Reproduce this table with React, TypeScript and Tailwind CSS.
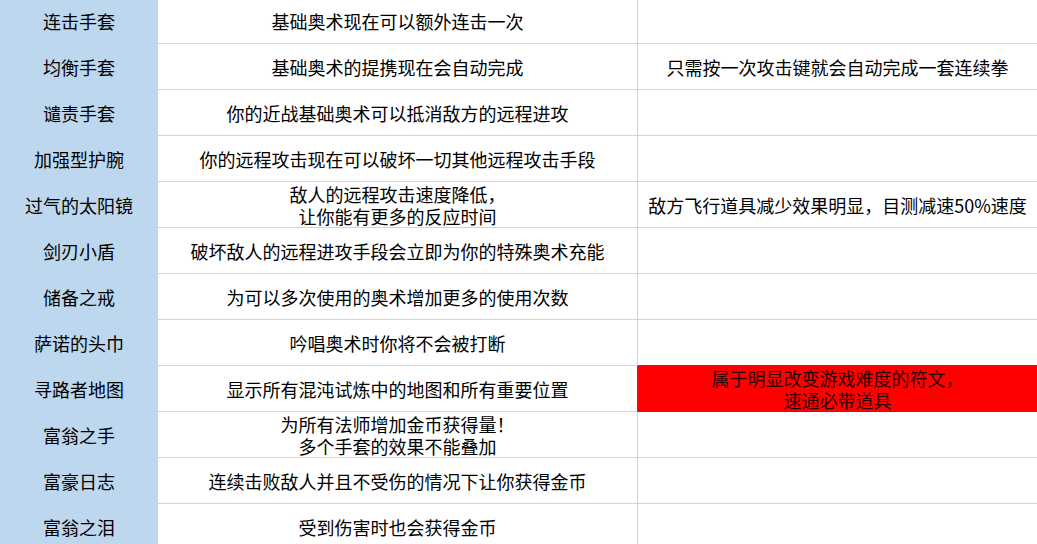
import React from 'react';

type Row = {
  name: string;
  desc: string[];
  note?: string[];
  hot?: boolean;
};

const rows: Row[] = [
  { name: '连击手套', desc: ['基础奥术现在可以额外连击一次'] },
  { name: '均衡手套', desc: ['基础奥术的提携现在会自动完成'], note: ['只需按一次攻击键就会自动完成一套连续拳'] },
  { name: '谴责手套', desc: ['你的近战基础奥术可以抵消敌方的远程进攻'] },
  { name: '加强型护腕', desc: ['你的远程攻击现在可以破坏一切其他远程攻击手段'] },
  {
    name: '过气的太阳镜',
    desc: ['敌人的远程攻击速度降低，', '让你能有更多的反应时间'],
    note: ['敌方飞行道具减少效果明显，目测减速50%速度'],
  },
  { name: '剑刃小盾', desc: ['破坏敌人的远程进攻手段会立即为你的特殊奥术充能'] },
  { name: '储备之戒', desc: ['为可以多次使用的奥术增加更多的使用次数'] },
  { name: '萨诺的头巾', desc: ['吟唱奥术时你将不会被打断'] },
  {
    name: '寻路者地图',
    desc: ['显示所有混沌试炼中的地图和所有重要位置'],
    note: ['属于明显改变游戏难度的符文，', '速通必带道具'],
    hot: true,
  },
  { name: '富翁之手', desc: ['为所有法师增加金币获得量！', '多个手套的效果不能叠加'] },
  { name: '富豪日志', desc: ['连续击败敌人并且不受伤的情况下让你获得金币'] },
  { name: '富翁之泪', desc: ['受到伤害时也会获得金币'] },
];

const Lines = ({ lines }: { lines: string[] }) => (
  <div className="text-center leading-[22px]">
    {lines.map((l, i) => (
      <div key={i}>{l}</div>
    ))}
  </div>
);

const App = () => {
  return (
    <div className="w-[1037px] h-[544px] overflow-hidden bg-white text-black text-[18px] font-['Noto_Sans_CJK_SC','Noto_Sans',sans-serif]">
      <div className="-mt-[2px] grid grid-cols-[158px_480px_1fr] auto-rows-[46px]">
        {rows.map((r, i) => {
          const nextHot = rows[i + 1]?.hot;
          return (
            <React.Fragment key={r.name}>
              <div className="flex items-center justify-center bg-[#bdd7ee]">{r.name}</div>
              <div
                className={`flex items-center justify-center border-b border-r border-b-[#d4d4d4] ${
                  r.hot ? 'border-r-[#ff0000]' : 'border-r-[#d4d4d4]'
                }`}
              >
                <Lines lines={r.desc} />
              </div>
              <div
                className={`flex items-center justify-center border-b ${
                  r.hot ? 'bg-[#ff0000] border-b-[#ff0000] text-[#2a0000]' : nextHot ? 'border-b-[#ff0000]' : 'border-b-[#d4d4d4]'
                }`}
              >
                {r.note && <Lines lines={r.note} />}
              </div>
            </React.Fragment>
          );
        })}
      </div>
    </div>
  );
};

export default App;
